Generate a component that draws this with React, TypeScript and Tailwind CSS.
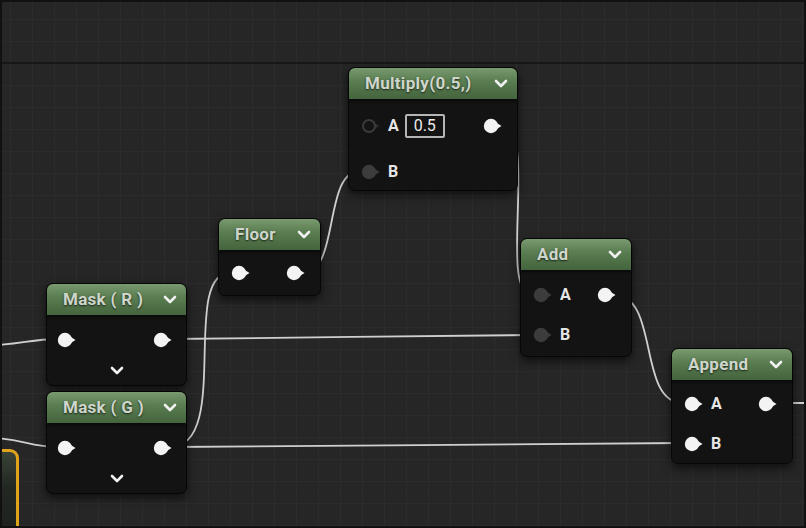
import type { ReactNode } from 'react';

type PinKind = 'on' | 'off' | 'hollow';

function Pin({ kind }: { kind: PinKind }) {
	const fill = kind === 'on' ? '#f3f3f3' : kind === 'off' ? '#3c3c3c' : '#141414';
	const tri = kind === 'on' ? '#f3f3f3' : kind === 'off' ? '#3c3c3c' : '#2c2c2c';
	return (
		<svg width="20" height="16" viewBox="0 0 20 16" className="shrink-0">
			<polygon points="13,4.5 18.5,8 13,11.5" fill={tri} />
			<circle cx="8" cy="8" r={kind === 'hollow' ? 6 : 7.2} fill={fill} stroke={kind === 'hollow' ? '#3a3a3a' : 'none'} strokeWidth="2" />
		</svg>
	);
}

function Chevron() {
	return (
		<svg width="14" height="9" viewBox="0 0 14 9" className="shrink-0">
			<polyline points="2,2 7,7 12,2" fill="none" stroke="#f0f0f0" strokeWidth="2.6" strokeLinecap="round" strokeLinejoin="round" />
		</svg>
	);
}

function Label({ text }: { text: string }) {
	return <span className="ml-[7px] text-[16px] font-bold leading-none text-[#e6e6e6]">{text}</span>;
}

function Node({ title, className, body, children }: { title: string; className: string; body: string; children: ReactNode }) {
	return (
		<div className={`absolute flex flex-col rounded-[7px] border border-[#060606] bg-[#131313] shadow-[0_4px_10px_rgba(0,0,0,0.6)] ${className}`}>
			<div className="flex h-[31px] shrink-0 items-center justify-between rounded-t-[6px] bg-[linear-gradient(180deg,#7a9a70_0%,#5b7e52_40%,#44643d_100%)] pl-4 pr-[9px] shadow-[0_2px_3px_rgba(0,0,0,0.5)]">
				<span className="text-[17px] font-bold tracking-[0.3px] text-[#cfd6cb] [text-shadow:0_1px_2px_rgba(0,0,0,0.7)]">{title}</span>
				<Chevron />
			</div>
			<div className={`flex flex-col ${body}`}>{children}</div>
		</div>
	);
}

function Wires() {
	const wires = [
		'M -10 345 C 20 345, 30 339, 58 339',
		'M -10 438 C 20 438, 30 447, 58 447',
		'M 170 339 C 260 339, 440 335, 532 335',
		'M 170 447 C 300 447, 560 443, 683 443',
		'M 170 447 C 232 447, 180 273, 230 273',
		'M 303 273 C 340 273, 323 171, 360 171',
		'M 500 123 C 540 123, 497 295, 532 295',
		'M 614 295 C 660 295, 637 403, 683 403',
		'M 775 403 C 790 403, 800 403, 815 403',
	];
	return (
		<svg className="absolute inset-0" width="806" height="528" viewBox="0 0 806 528">
			<defs>
				<pattern id="grid" x="10" y="19" width="22" height="22" patternUnits="userSpaceOnUse">
					<path d="M 0 0 L 22 0 M 0 0 L 0 22" stroke="#2f2f2f" strokeWidth="1.2" fill="none" />
				</pattern>
			</defs>
			<rect width="806" height="528" fill="#262626" />
			<rect width="806" height="528" fill="url(#grid)" />
			<rect x="0" y="62" width="806" height="2" fill="#171717" />
			{wires.map((d, i) => (
				<path key={i} d={d} fill="none" stroke="#cfcfcf" strokeWidth="1.8" />
			))}
		</svg>
	);
}

export default function App() {
	return (
		<div className="relative h-[528px] w-[806px] overflow-hidden border-2 border-[#111] bg-[#262626] font-[Roboto,'Liberation_Sans',sans-serif]">
			<div className="absolute -left-[2px] -top-[2px]">
				<Wires />
			</div>

			{/* selected node peeking in at the bottom left */}
			<div className="absolute -left-[60px] top-[447px] h-[120px] w-[77px] rounded-[9px] border-[3px] border-[#e0a31c] bg-[linear-gradient(180deg,#3a4437_0%,#232823_30%,#1b1d1b_100%)]" />

			<Node title="Multiply(0.5,)" className="left-[346px] top-[65px] h-[124px] w-[170px]" body="pt-4 gap-6">
				<div className="flex h-[22px] items-center justify-between pl-3 pr-[14px]">
					<div className="flex items-center">
						<Pin kind="hollow" />
						<Label text="A" />
						<div className="ml-[6px] flex h-[24px] w-[40px] items-center justify-center rounded-[2px] border-2 border-[#b5b5b5] text-[16px] leading-none text-[#ececec]">0.5</div>
					</div>
					<Pin kind="on" />
				</div>
				<div className="flex h-[22px] items-center pl-3">
					<Pin kind="off" />
					<Label text="B" />
				</div>
			</Node>

			<Node title="Floor" className="left-[216px] top-[216px] h-[78px] w-[103px]" body="pt-3">
				<div className="flex h-[22px] items-center justify-between pl-3 pr-[14px]">
					<Pin kind="on" />
					<Pin kind="on" />
				</div>
			</Node>

			<Node title="Mask ( R )" className="left-[44px] top-[281px] h-[103px] w-[141px]" body="pt-[14px]">
				<div className="flex h-[22px] items-center justify-between pl-[10px] pr-[13px]">
					<Pin kind="on" />
					<Pin kind="on" />
				</div>
				<div className="mt-[15px] flex justify-center">
					<Chevron />
				</div>
			</Node>

			<Node title="Mask ( G )" className="left-[44px] top-[389px] h-[103px] w-[141px]" body="pt-[14px]">
				<div className="flex h-[22px] items-center justify-between pl-[10px] pr-[13px]">
					<Pin kind="on" />
					<Pin kind="on" />
				</div>
				<div className="mt-[15px] flex justify-center">
					<Chevron />
				</div>
			</Node>

			<Node title="Add" className="left-[518px] top-[236px] h-[119px] w-[112px]" body="pt-[14px] gap-[18px]">
				<div className="flex h-[22px] items-center justify-between pl-3 pr-[14px]">
					<div className="flex items-center">
						<Pin kind="off" />
						<Label text="A" />
					</div>
					<Pin kind="on" />
				</div>
				<div className="flex h-[22px] items-center pl-3">
					<Pin kind="off" />
					<Label text="B" />
				</div>
			</Node>

			<Node title="Append" className="left-[669px] top-[346px] h-[116px] w-[122px]" body="pt-[13px] gap-[18px]">
				<div className="flex h-[22px] items-center justify-between pl-3 pr-[14px]">
					<div className="flex items-center">
						<Pin kind="on" />
						<Label text="A" />
					</div>
					<Pin kind="on" />
				</div>
				<div className="flex h-[22px] items-center pl-3">
					<Pin kind="on" />
					<Label text="B" />
				</div>
			</Node>
		</div>
	);
}
